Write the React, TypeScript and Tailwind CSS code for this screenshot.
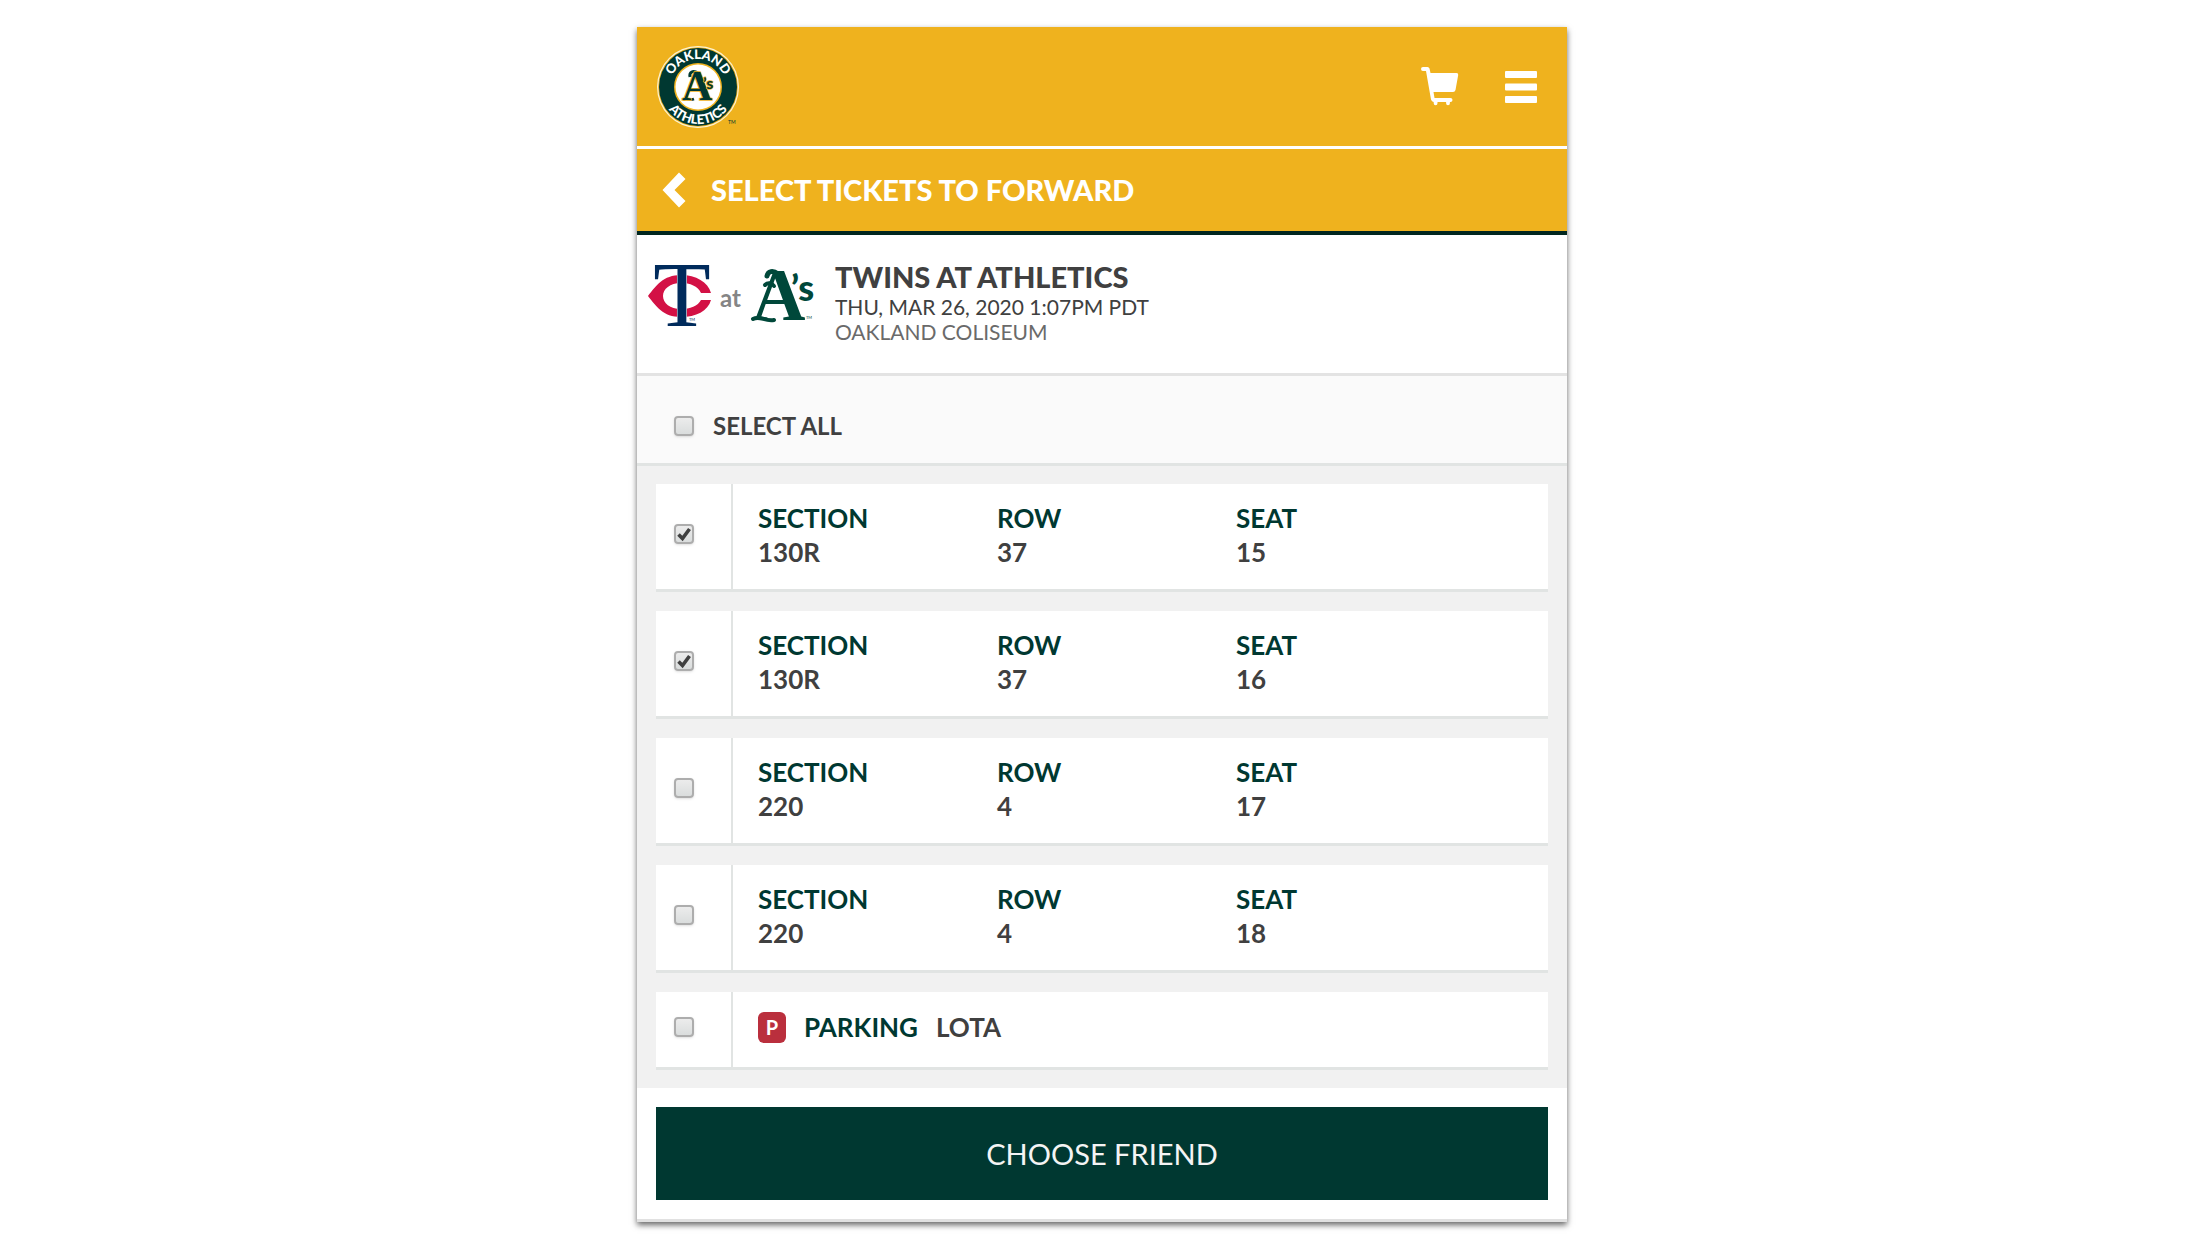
import { useState } from 'react';

type Ticket = {
  id: string;
  section: string;
  row: string;
  seat: string;
};

type CheckboxProps = {
  id: string;
  label?: string;
  checked: boolean;
  onChange: () => void;
};

const TICKETS: Ticket[] = [
  { id: 'seat-15', section: '130R', row: '37', seat: '15' },
  { id: 'seat-16', section: '130R', row: '37', seat: '16' },
  { id: 'seat-17', section: '220', row: '4', seat: '17' },
  { id: 'seat-18', section: '220', row: '4', seat: '18' },
];

const PARKING_ID = 'parking';
const ALL_IDS = [...TICKETS.map((ticket) => ticket.id), PARKING_ID];

const ClubLogo = () => (
  <svg width="84" height="84" viewBox="0 0 84 84" className="overflow-visible" aria-label="Oakland Athletics">
    <defs>
      <path id="arc-top" d="M14 42a28 28 0 0 1 56 0" />
      <path id="arc-bottom" d="M5 42a37 37 0 0 0 74 0" />
    </defs>
    <circle cx="42" cy="42" r="41" fill="#fdf3d3" />
    <circle cx="42" cy="42" r="39.8" fill="#efb21e" />
    <circle cx="42" cy="42" r="39" fill="#003831" />
    <circle cx="42" cy="42" r="24" fill="#efb21e" />
    <circle cx="42" cy="42" r="22.5" fill="#fff" />
    <g fill="#fff" fontFamily="Lato, sans-serif" fontWeight="900" fontSize="13" textAnchor="middle">
      <text>
        <textPath href="#arc-top" startOffset="50%">OAKLAND</textPath>
      </text>
      <text>
        <textPath href="#arc-bottom" startOffset="50%">ATHLETICS</textPath>
      </text>
    </g>
    <path d="M34 32c-1-5 3-7 8-4" fill="none" stroke="#003831" strokeWidth="3" />
    <path d="M27 55c4-3 6 1 11-1" fill="none" stroke="#003831" strokeWidth="2.500" />
    <text
      x="26"
      y="55"
      fontSize="42"
      fill="#003831"
      stroke="#efb21e"
      strokeWidth="1.500"
      paintOrder="stroke"
      fontFamily="'Liberation Serif', serif"
      fontWeight="700"
    >
      A
      <tspan x="47" y="44" fontSize="16" fontFamily="Lato, sans-serif">’s</tspan>
    </text>
    <text x="72" y="79" fontSize="5" fontFamily="Lato, sans-serif" fill="#003831">TM</text>
  </svg>
);

const TwinsLogo = () => (
  <svg width="64" height="64" viewBox="0 0 64 64" className="overflow-visible" aria-label="Twins">
    <path
      d="M0 32C8 22 15 11 33 11c15 0 27 7 30 18H53c-3-7-11-10-20-10-11 0-18 6-18 13s7 13 18 13c9 0 17-3 20-9h10c-3 11-15 17-30 17C15 53 8 42 0 32Z"
      fill="#d31145"
    />
    <g fill="#002b5c" stroke="#fff" strokeWidth="1" paintOrder="stroke">
      <text x="34" y="62" fontSize="94" fontFamily="'Liberation Serif', serif" textAnchor="middle">T</text>
    </g>
    <text x="41" y="57" fontSize="4" fontFamily="Lato, sans-serif" fill="#002b5c">TM</text>
  </svg>
);

const AthleticsLogo = () => (
  <svg width="66" height="56" viewBox="0 0 66 56" className="overflow-visible" aria-label="Athletics">
    <g fill="none" stroke="#00483a" strokeLinecap="round">
      <path d="M18 8C19 3 24 2 29 6" strokeWidth="5" />
      <path d="M16 17c3-3 7-2 9 1" strokeWidth="4" />
      <path d="M4 51c7-4 12 3 21 1" strokeWidth="4" />
    </g>
    <text x="3" y="52" fontSize="74" fontWeight="700" fontFamily="'Liberation Serif', serif" fill="#00483a">
      A
      <tspan x="42" y="33" fontSize="36" fontWeight="900" fontFamily="Lato, sans-serif">’s</tspan>
    </text>
    <text x="57" y="51" fontSize="4" fontFamily="Lato, sans-serif" fill="#00483a">TM</text>
  </svg>
);

const CartIcon = () => (
  <svg width="38" height="39" viewBox="0 0 38 39" fill="#fff">
    <path d="M2 0h4.500q1.500 0 2 1.500L9.500 6H35.500q2 0 1.700 2l-2.700 15q-.5 2-2.500 2H12.500l1 6H29.500a1.900 1.900 0 0 1 0 4h-.6v1.300a1.900 1.900 0 0 1-3.800 0V35H16.500v1.300a1.900 1.900 0 0 1-3.800 0V35q-2-.3-2.700-2.500L5 4H2a2 2 0 0 1 0-4Z" />
  </svg>
);

const MenuIcon = () => (
  <svg width="32" height="32" viewBox="0 0 32 32" fill="#fff">
    <rect width="32" height="7" rx="1" />
    <rect y="12.500" width="32" height="7" rx="1" />
    <rect y="25" width="32" height="7" rx="1" />
  </svg>
);

const BackIcon = () => (
  <svg width="24" height="36" viewBox="0 0 24 36" fill="#fff">
    <path d="M17 .5 23.500 7 12.500 18l11 11-6.500 6.500L.5 18Z" />
  </svg>
);

const Checkbox = ({ id, label, checked, onChange }: CheckboxProps) => (
  <span className="relative block size-5 shrink-0">
    <input
      id={id}
      type="checkbox"
      aria-label={label}
      checked={checked}
      onChange={onChange}
      className="block size-5 appearance-none rounded-sm border-2 border-[#adadad] bg-linear-to-b from-[#ececec] to-[#dadddd] shadow-sm"
    />
    {checked && (
      <svg className="pointer-events-none absolute inset-0" width="20" height="20" viewBox="0 0 20 20">
        <path d="m4.500 10.500 4 4L15.500 5" fill="none" stroke="#404040" strokeWidth="3.600" />
      </svg>
    )}
  </span>
);

const Field = ({ name, value }: { name: string; value: string }) => (
  <div className="w-[239px]">
    <dt className="text-[#003831]">{name}</dt>
    <dd>{value}</dd>
  </div>
);

const App = () => {
  const [selected, setSelected] = useState<string[]>(['seat-15', 'seat-16']);
  const allSelected = selected.length === ALL_IDS.length;

  const toggle = (id: string) => {
    setSelected((prev) => (prev.includes(id) ? prev.filter((item) => item !== id) : [...prev, id]));
  };

  return (
    <div className="bg-white py-[27px] pr-1 font-[Lato,sans-serif] text-[#404040]">
      <main className="mx-auto w-full max-w-[930px] border-b-3 border-[#e1e1e1] bg-white shadow-[0_3px_6px_rgba(0,0,0,0.6)]">
        <header className="flex h-[122px] items-center justify-between border-b-3 border-white bg-[#efb21e] pr-[30px] pl-[19px]">
          <a href="#home">
            <ClubLogo />
          </a>
          <div className="flex items-center gap-[46px]">
            <button aria-label="Cart">
              <CartIcon />
            </button>
            <button aria-label="Menu">
              <MenuIcon />
            </button>
          </div>
        </header>

        <div className="flex h-[86px] items-center gap-[25px] border-b-4 border-[#00261f] bg-[#efb21e] pl-[25px] text-white">
          <button aria-label="Back">
            <BackIcon />
          </button>
          <h1 className="text-[29px] leading-9 font-black">SELECT TICKETS TO FORWARD</h1>
        </div>

        <section className="flex h-[141px] items-start border-b-3 border-[#e3e3e3] pt-[25px] pl-[11px]">
          <div className="flex items-start gap-2 pt-1">
            <TwinsLogo />
            <span className="pt-5 text-2xl leading-7 font-bold text-[#858585]">at</span>
            <div className="pt-1">
              <AthleticsLogo />
            </div>
          </div>
          <div className="pl-5">
            <h2 className="text-[29px] leading-[34px] font-black">TWINS AT ATHLETICS</h2>
            <p className="text-[21px] leading-[25px]">THU, MAR 26, 2020 1:07PM PDT</p>
            <p className="text-[21px] leading-[25px] text-[#6a6a6a]">OAKLAND COLISEUM</p>
          </div>
        </section>

        <div className="flex h-[90px] items-center gap-[19px] border-b-3 border-[#e1e4e3] bg-[#fafafa] pt-3 pl-[37px]">
          <Checkbox
            id="select-all"
            checked={allSelected}
            onChange={() => setSelected(allSelected ? [] : ALL_IDS)}
          />
          <label htmlFor="select-all" className="text-2xl leading-8 font-bold">
            SELECT ALL
          </label>
        </div>

        <ul className="flex flex-col gap-[19px] bg-[#f1f1f1] px-[19px] py-[18px] text-[26px] leading-[34px] font-bold">
          {TICKETS.map((ticket) => (
            <li key={ticket.id} className="flex border-b-3 border-[#e1e4e3] bg-white">
              <div className="flex w-[77px] items-center border-r-2 border-[#e1e4e3] pb-1.5 pl-[18px]">
                <Checkbox
                  id={ticket.id}
                  label={`Seat ${ticket.seat}`}
                  checked={selected.includes(ticket.id)}
                  onChange={() => toggle(ticket.id)}
                />
              </div>
              <dl className="flex pt-[17px] pb-5 pl-[25px]">
                <Field name="SECTION" value={ticket.section} />
                <Field name="ROW" value={ticket.row} />
                <Field name="SEAT" value={ticket.seat} />
              </dl>
            </li>
          ))}
          <li className="flex border-b-3 border-[#e1e4e3] bg-white">
            <div className="flex w-[77px] items-center border-r-2 border-[#e1e4e3] pb-1.5 pl-[18px]">
              <Checkbox
                id={PARKING_ID}
                checked={selected.includes(PARKING_ID)}
                onChange={() => toggle(PARKING_ID)}
              />
            </div>
            <label htmlFor={PARKING_ID} className="flex items-center gap-[18px] pt-[18px] pb-[23px] pl-[25px]">
              <span className="flex h-[31px] w-7 items-center justify-center rounded-md bg-[#ba2f3d] text-xl text-white">
                P
              </span>
              <span className="text-[#003831]">PARKING</span>
              <span>LOTA</span>
            </label>
          </li>
        </ul>

        <div className="px-[19px] py-[19px]">
          <button className="block h-[93px] w-full bg-[#003831] text-[29px] text-[#f4f4f4]">CHOOSE FRIEND</button>
        </div>
      </main>
    </div>
  );
};

export default App;
